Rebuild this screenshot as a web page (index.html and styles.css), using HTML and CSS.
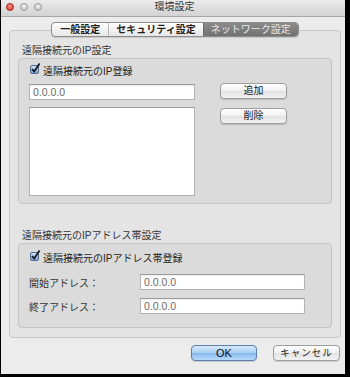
FILE: index.html
```html
<!DOCTYPE html>
<html lang="ja">
<head>
  <meta charset="UTF-8" />
  <title>環境設定</title>
  <link rel="stylesheet" href="styles.css">
</head>
<body>
  <div class="window">
    <div class="titlebar">
      <div class="lights">
        <span class="light close"></span>
        <span class="light"></span>
        <span class="light"></span>
      </div>
      <div class="title">環境設定</div>
      <div></div>
    </div>

    <div class="tabwrap">
      <div class="tabs">
        <span class="tab">一般設定</span>
        <span class="tab">セキュリティ設定</span>
        <span class="tab active">ネットワーク設定</span>
      </div>
    </div>

    <div class="tabview">
      <!-- IP -->
      <div class="section-label">遠隔接続元のIP設定</div>
      <div class="group group-ip">
        <div class="check">
          <svg width="11" height="11" viewBox="0 0 11 11">
            <defs>
              <linearGradient id="cb1" x1="0" y1="0" x2="0" y2="1">
                <stop offset="0" stop-color="#d3e6fa"/>
                <stop offset="1" stop-color="#6fa4dd"/>
              </linearGradient>
            </defs>
            <rect x="0.5" y="2.5" width="8" height="8" rx="1.5" fill="url(#cb1)" stroke="#55698a"/>
            <path d="M2 6 L4.2 8.6 L9.6 0.6" fill="none" stroke="#15151f" stroke-width="1.7"/>
          </svg>
          <span>遠隔接続元のIP登録</span>
        </div>
        <div class="ip-row">
          <div class="ip-col">
            <div class="field">0.0.0.0</div>
            <div class="list"></div>
          </div>
          <div class="btn-col">
            <span class="btn">追加</span>
            <span class="btn">削除</span>
          </div>
        </div>
      </div>

      <!-- range -->
      <div class="section-label second">遠隔接続元のIPアドレス帯設定</div>
      <div class="group group-range">
        <div class="check">
          <svg width="11" height="11" viewBox="0 0 11 11">
            <defs>
              <linearGradient id="cb2" x1="0" y1="0" x2="0" y2="1">
                <stop offset="0" stop-color="#d3e6fa"/>
                <stop offset="1" stop-color="#6fa4dd"/>
              </linearGradient>
            </defs>
            <rect x="0.5" y="2.5" width="8" height="8" rx="1.5" fill="url(#cb2)" stroke="#55698a"/>
            <path d="M2 6 L4.2 8.6 L9.6 0.6" fill="none" stroke="#15151f" stroke-width="1.7"/>
          </svg>
          <span>遠隔接続元のIPアドレス帯登録</span>
        </div>
        <div class="range-row">
          <span class="range-label">開始アドレス：</span>
          <div class="field wide">0.0.0.0</div>
        </div>
        <div class="range-row">
          <span class="range-label">終了アドレス：</span>
          <div class="field wide">0.0.0.0</div>
        </div>
      </div>
    </div>

    <div class="footer">
      <span class="btn ok">OK</span>
      <span class="btn cancel">キャンセル</span>
    </div>
  </div>
</body>
</html>
```

FILE: styles.css
```css
* {
  margin: 0;
  padding: 0;
  box-sizing: border-box;
}

body {
  background: #000;
  font-family: "Liberation Sans", "Noto Sans CJK JP", sans-serif;
  font-size: 10px;
  color: #2a2a2a;
}

.window {
  margin-left: 1px;
  width: 344px;
  height: 374px;
  background: #ececec;
}

/* Barre de titre */
.titlebar {
  height: 17px;
  display: grid;
  grid-template-columns: 1fr auto 1fr;
  align-items: center;
  background: linear-gradient(to bottom, #ececec, #d2d2d2);
  border-bottom: 1px solid #a6a6a6;
  padding-bottom: 2px;
}

.lights {
  display: flex;
  gap: 6px;
  padding-left: 5px;
}

.light {
  width: 8px;
  height: 8px;
  border-radius: 50%;
  background: radial-gradient(circle at 50% 35%, #f4f4f4, #b9b9b9);
  border: 1px solid #9a9a9a;
}

.light.close {
  background: radial-gradient(circle at 50% 35%, #ff9a8a, #d8251c);
  border-color: #a0261e;
}

.title {
  font-size: 10px;
  line-height: 12px;
  color: #333;
  padding-left: 3px;
}

/* Onglets */
.tabwrap {
  margin: 5px 4px 0 8px;
  display: flex;
  justify-content: center;
  position: relative;
  z-index: 1;
}

.tabs {
  display: flex;
  height: 15px;
  border: 1px solid #8c8c8c;
  border-radius: 4px;
  overflow: hidden;
  background: linear-gradient(to bottom, #ffffff, #e6e6e6);
  box-shadow: 0 1px 1px rgba(0,0,0,0.12);
}

.tab {
  padding: 0 7px;
  font-weight: bold;
  line-height: 13px;
  color: #1e1e1e;
  border-left: 1px solid #b5b5b5;
}

.tab:first-child {
  border-left: none;
  padding: 0 8px;
}

.tab.active {
  background: linear-gradient(to bottom, #8a8a8a, #727272);
  color: #e9e9e9;
  font-weight: normal;
  border-left-color: #6a6a6a;
}

.tabview {
  margin: -7px 4px 0 8px;
  height: 308px;
  border: 1px solid #c6c6c6;
  border-radius: 4px;
  background: #e4e4e4;
  padding: 14px 8px 0 8px;
}

.section-label {
  margin-left: 4px;
  line-height: 12px;
  margin-bottom: 1px;
  color: #333;
}

.section-label.second {
  margin-top: 26px;
}

/* Groupes */
.group {
  border: 1px solid #c4c4c4;
  border-radius: 4px;
  background: #dbdbdb;
  padding-left: 10px;
}

.group-ip {
  height: 146px;
  padding-top: 5px;
}

.group-range {
  height: 85px;
  padding-top: 7px;
}

.check {
  display: flex;
  align-items: center;
  gap: 2px;
  height: 12px;
  margin-left: 1px;
  color: #222;
}

.check svg {
  margin-top: -3px;
}

.ip-row {
  display: flex;
  gap: 25px;
  margin-top: 8px;
}

.ip-col {
  width: 166px;
  display: flex;
  flex-direction: column;
  gap: 7px;
}

.field {
  height: 16px;
  background: #fff;
  border: 1px solid #b3b3b3;
  border-top-color: #9c9c9c;
  box-shadow: inset 0 1px 1px rgba(0,0,0,0.08);
  padding-left: 3px;
  line-height: 14px;
  font-size: 10.5px;
  color: #6a6a6a;
}

.list {
  height: 89px;
  background: #fff;
  border: 1px solid #b0b0b0;
  border-top-color: #9c9c9c;
}

.btn-col {
  display: flex;
  flex-direction: column;
  gap: 9px;
  margin-top: -1px;
}

.btn {
  display: block;
  width: 67px;
  height: 16px;
  border: 1px solid #9d9d9d;
  border-radius: 4px;
  background: linear-gradient(to bottom, #ffffff, #f0f0f0 50%, #e2e2e2 51%, #f2f2f2);
  box-shadow: 0 1px 1px rgba(0,0,0,0.15);
  text-align: center;
  line-height: 14px;
  color: #222;
}

.range-row {
  display: flex;
  align-items: center;
  margin-top: 8px;
}

.check + .range-row {
  margin-top: 11px;
}

.range-label {
  width: 111px;
  color: #333;
}

.field.wide {
  width: 165px;
}

/* Boutons du bas */
.footer {
  display: flex;
  justify-content: flex-end;
  gap: 16px;
  padding: 7px 5px 0 0;
}

.btn.ok {
  width: 66px;
  border-color: #5c7fae;
  background: linear-gradient(to bottom, #d7eafb, #a9cdf3 50%, #86b8ec 51%, #b7daf9);
  font-size: 11px;
  color: #111;
}

.btn.cancel {
  font-size: 9.5px;
  letter-spacing: 1px;
}
```
